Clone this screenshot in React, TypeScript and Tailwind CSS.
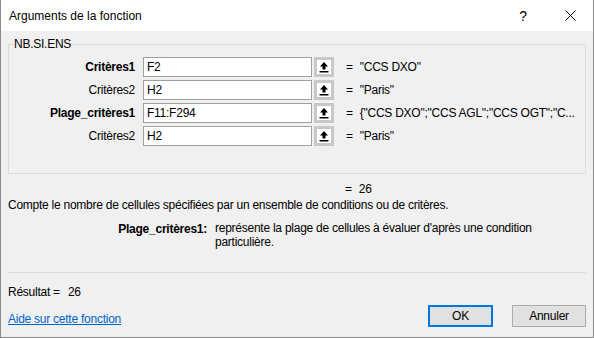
import React from 'react';

const FONT = { fontFamily: '"Liberation Sans", Arial, sans-serif' };

type Arg = { label: string; bold: boolean; input: string; value: string };

const ARGS: Arg[] = [
  { label: 'Critères1', bold: true, input: 'F2', value: '"CCS DXO"' },
  { label: 'Critères2', bold: false, input: 'H2', value: '"Paris"' },
  { label: 'Plage_critères1', bold: true, input: 'F11:F294', value: '{"CCS DXO";"CCS AGL";"CCS OGT";"C...' },
  { label: 'Critères2', bold: false, input: 'H2', value: '"Paris"' },
];

function RefButton() {
  return (
    <div className="flex h-[20px] w-[20px] items-center justify-center border-[3px] border-[#c8c8c8] bg-white">
      <svg width="10" height="12" viewBox="0 0 10 12">
        <polygon points="5,1 9,5.5 6.5,5.5 6.5,8.5 3.5,8.5 3.5,5.5 1,5.5" fill="#000" />
        <rect x="0.5" y="10" width="9" height="1.5" fill="#000" />
      </svg>
    </div>
  );
}

export default function App() {
  return (
    <div
      className="flex h-[338px] w-[594px] flex-col border-x border-b border-[#8a8a8a] bg-[#f0f0f0] text-[12px] leading-[16px] tracking-[-0.25px] text-black"
      style={FONT}
    >
      {/* Title bar */}
      <div className="flex h-[31px] shrink-0 items-center bg-white pl-[8px] tracking-normal">
        <span className="flex-1 text-[12px]">Arguments de la fonction</span>
        <span className="mr-[38px] text-[14px]">?</span>
        <svg width="11" height="11" viewBox="0 0 11 11" className="mr-[17px]">
          <path d="M0.5 0.5 L10.5 10.5 M10.5 0.5 L0.5 10.5" stroke="#000" strokeWidth="1" />
        </svg>
      </div>

      <div className="flex flex-1 flex-col px-[7px]">
        {/* Arguments group */}
        <fieldset className="mt-[5px] h-[138px] border border-[#dcdcdc] pt-[5px]">
          <legend className="ml-[4px] px-[1px]">NB.SI.ENS</legend>
          <div className="flex flex-col gap-[3px]">
            {ARGS.map((a, i) => (
              <div key={i} className="flex h-[20px] items-center">
                <div className={`w-[126px] text-right ${a.bold ? 'font-bold' : ''}`}>{a.label}</div>
                <div className="ml-[8px] flex h-[20px] w-[169px] items-center border border-[#a0a0a0] bg-white pl-[3px]">
                  {a.input}
                </div>
                <div className="ml-[2px]">
                  <RefButton />
                </div>
                <span className="ml-[12px]">=</span>
                <span className="ml-[7px] whitespace-nowrap">{a.value}</span>
              </div>
            ))}
          </div>
        </fieldset>

        <div className="mt-[7px] flex">
          <span className="ml-[337px]">=</span>
          <span className="ml-[7px]">26</span>
        </div>
        <div>
          Compte le nombre de cellules spécifiées par un ensemble de conditions ou de critères.
        </div>
        <div className="mt-[8px] flex">
          <div className="w-[199px] text-right font-bold">Plage_critères1:</div>
          <div className="ml-[8px] w-[340px] leading-[14px]">
            représente la plage de cellules à évaluer d'après une condition particulière.
          </div>
        </div>

        <div className="mt-auto border-t border-[#dcdcdc]" />
        <div className="mt-[11px] flex">
          <span>Résultat =</span>
          <span className="ml-[8px]">26</span>
        </div>
        <div className="mb-[10px] mt-[5px] flex items-end">
          <a className="flex-1 text-[#0066cc] underline">Aide sur cette fonction</a>
          <button className="h-[22px] w-[65px] border-2 border-[#0078d7] bg-[#e1e1e1]">OK</button>
          <button className="ml-[19px] h-[22px] w-[74px] border border-[#adadad] bg-[#e1e1e1]">Annuler</button>
        </div>
      </div>
    </div>
  );
}
